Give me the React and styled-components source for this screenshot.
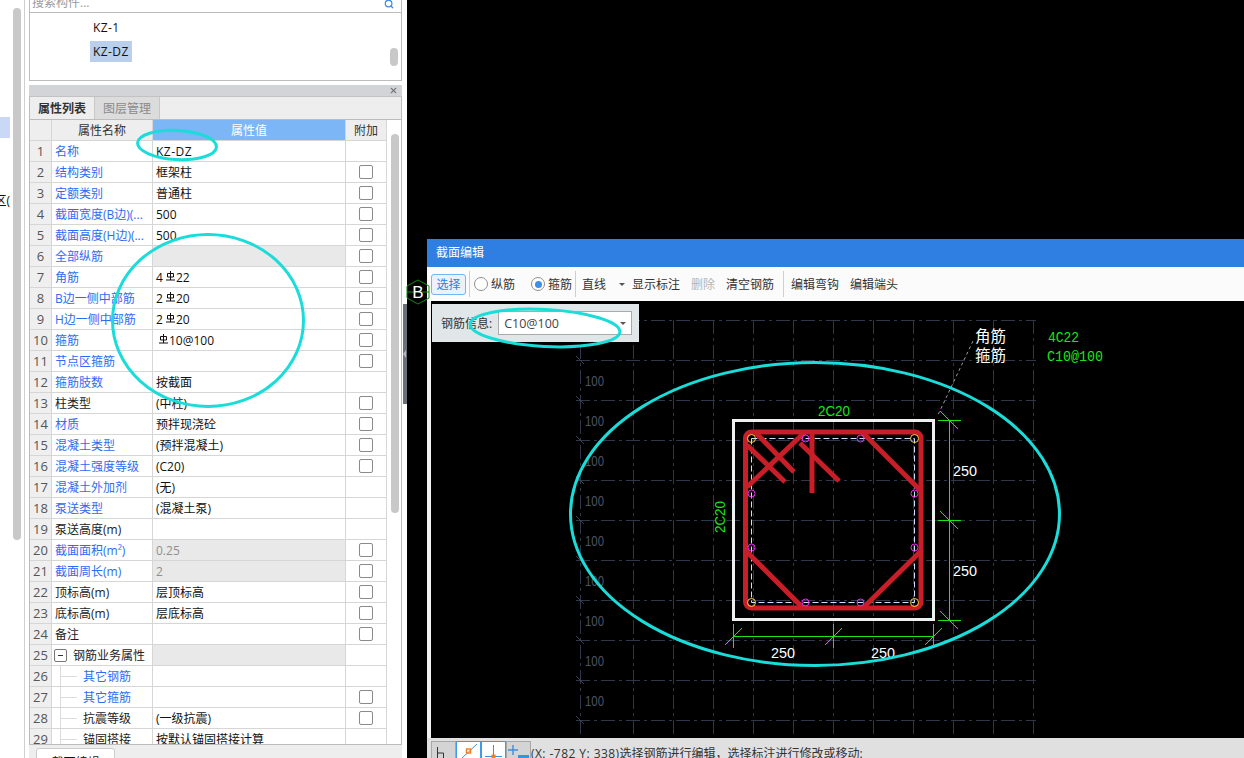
import React from 'react';
import styled, { createGlobalStyle } from 'styled-components';
import { Search, X } from 'lucide-react';

const ROWS = [
  { name: '名称', value: 'KZ-DZ', blue: true, spaced: true },
  { name: '结构类别', value: '框架柱', blue: true, check: true },
  { name: '定额类别', value: '普通柱', blue: true, check: true },
  { name: '截面宽度(B边)(...', value: '500', blue: true, check: true },
  { name: '截面高度(H边)(...', value: '500', blue: true, check: true },
  { name: '全部纵筋', value: '', blue: true, check: true, grey: true },
  { name: '角筋', value: '4Φ22', blue: true, check: true },
  { name: 'B边一侧中部筋', value: '2Φ20', blue: true, check: true },
  { name: 'H边一侧中部筋', value: '2Φ20', blue: true, check: true },
  { name: '箍筋', value: 'Φ10@100', blue: true, check: true },
  { name: '节点区箍筋', value: '', blue: true, check: true },
  { name: '箍筋肢数', value: '按截面', blue: true },
  { name: '柱类型', value: '(中柱)', check: true },
  { name: '材质', value: '预拌现浇砼', blue: true, check: true },
  { name: '混凝土类型', value: '(预拌混凝土)', blue: true, check: true },
  { name: '混凝土强度等级', value: '(C20)', blue: true, check: true },
  { name: '混凝土外加剂', value: '(无)', blue: true },
  { name: '泵送类型', value: '(混凝土泵)', blue: true },
  { name: '泵送高度(m)', value: '' },
  { name: '截面面积(m²)', value: '0.25', blue: true, check: true, grey: true, muted: true },
  { name: '截面周长(m)', value: '2', blue: true, check: true, grey: true, muted: true },
  { name: '顶标高(m)', value: '层顶标高', check: true },
  { name: '底标高(m)', value: '层底标高', check: true },
  { name: '备注', value: '', check: true },
  { name: '钢筋业务属性', value: '', grey: true, group: true },
  { name: '其它钢筋', value: '', blue: true, tree: true },
  { name: '其它箍筋', value: '', blue: true, tree: true, check: true },
  { name: '抗震等级', value: '(一级抗震)', tree: true, check: true },
  { name: '锚固搭接', value: '按默认锚固搭接计算', tree: true },
];

const GRID_X = [580, 633, 673, 713, 753, 793, 833, 873, 913, 953, 993, 1033];
const GRID_Y = [320, 360, 400, 440, 480, 520, 560, 600, 640, 680, 720];
const DIM_LABELS = [381, 421, 461, 501, 541, 581, 621, 661, 701];

const CORNER_BARS = [[751, 438], [914, 438], [751, 602], [914, 602]];
const SIDE_BARS = [
  [805, 438], [860, 438], [805, 602], [860, 602],
  [751, 493], [914, 493], [751, 547], [914, 547],
];
const STIRRUP_LINES = [
  [747, 445, 785, 482],
  [755, 432, 794, 472],
  [747, 487, 805, 432],
  [800, 443, 839, 481],
  [812, 433, 812, 493],
  [862, 432, 920, 490],
  [745, 550, 803, 608],
  [863, 608, 922, 550],
];

const RebarMark = () => (
  <MarkSvg viewBox="0 0 9 10" aria-hidden="true">
    <path d="M1.5 2.5h6v3.5h-6zM4.5 0v9M0 9h9" fill="none" stroke="#111" strokeWidth="1" />
  </MarkSvg>
);

const renderValue = (value) => {
  if (!value.includes('Φ')) return value;
  const [before, after] = value.split('Φ');
  return <>{before}<RebarMark />{after}</>;
};

const PropertyRow = ({ index, row }) => (
  <Row>
    <IndexCell>{index}</IndexCell>
    <NameCell $blue={row.blue} $tree={row.tree} $group={row.group}>
      {row.group && <ExpandBox />}
      {row.tree && <TreeLine />}
      {row.name}
    </NameCell>
    <ValueCell $grey={row.grey} $muted={row.muted} $spaced={row.spaced}>{renderValue(row.value)}</ValueCell>
    <ExtraCell>{row.check && <CheckBox />}</ExtraCell>
  </Row>
);

const CadDrawing = () => (
  <CadSvg viewBox="431 301 813 437">
    <g stroke="#30374a" strokeWidth="1" strokeDasharray="14 4 3 4" fill="none">
      {GRID_X.map((x) => <line key={x} x1={x + 0.5} y1="320" x2={x + 0.5} y2="738" />)}
      {GRID_Y.map((y) => <line key={y} x1="576" y1={y + 0.5} x2="1036" y2={y + 0.5} />)}
    </g>
    <g stroke="#3a4050" strokeWidth="1">
      {GRID_Y.map((y) => <line key={y} x1="576" y1={y - 4} x2="584" y2={y + 4} />)}
    </g>
    {DIM_LABELS.map((y) => (
      <CadText key={y} x="585" y={y + 5} fill="#4e5464" fontSize="14" textLength="19" lengthAdjust="spacingAndGlyphs">100</CadText>
    ))}

    <line x1="973" y1="341" x2="937" y2="417" stroke="#9a9a9a" strokeWidth="1" strokeDasharray="3 3" />

    <rect x="733.5" y="420.5" width="200" height="199" fill="none" stroke="#f0f0f0" strokeWidth="3" />
    <rect x="751.5" y="438.5" width="163" height="164" fill="none" stroke="#cfe0ff" strokeWidth="1" strokeDasharray="6 3" />
    <rect x="745.5" y="432" width="175.5" height="176" rx="6" fill="none" stroke="#c81e28" strokeWidth="5" />
    <g stroke="#c81e28" strokeWidth="5">
      {STIRRUP_LINES.map(([x1, y1, x2, y2]) => (
        <line key={`${x1}-${y1}`} x1={x1} y1={y1} x2={x2} y2={y2} />
      ))}
    </g>
    <g fill="none" strokeWidth="1">
      {CORNER_BARS.map(([cx, cy]) => <circle key={`${cx}-${cy}`} cx={cx + 0.5} cy={cy + 0.5} r="4" stroke="#ffd23c" />)}
      {SIDE_BARS.map(([cx, cy]) => <circle key={`${cx}-${cy}`} cx={cx + 0.5} cy={cy + 0.5} r="3.5" stroke="#f52cf5" />)}
    </g>

    <g stroke="#19e619" strokeWidth="1" fill="none">
      <line x1="949.5" y1="420" x2="949.5" y2="620" />
      <line x1="938" y1="420.5" x2="961" y2="420.5" />
      <line x1="938" y1="520.5" x2="961" y2="520.5" />
      <line x1="938" y1="620.5" x2="961" y2="620.5" />
      <line x1="940" y1="411" x2="958" y2="429" />
      <line x1="940" y1="511" x2="958" y2="529" />
      <line x1="940" y1="611" x2="958" y2="629" />
      <line x1="733" y1="636.5" x2="933" y2="636.5" />
      <line x1="733.5" y1="624" x2="733.5" y2="648" />
      <line x1="833.5" y1="624" x2="833.5" y2="648" />
      <line x1="933.5" y1="624" x2="933.5" y2="648" />
      <line x1="725" y1="645" x2="742" y2="628" />
      <line x1="825" y1="645" x2="842" y2="628" />
      <line x1="925" y1="645" x2="942" y2="628" />
    </g>

    <CadText x="818" y="416" fill="#19e619" fontSize="14" textLength="32" lengthAdjust="spacingAndGlyphs">2C20</CadText>
    <CadText x="725" y="533" fill="#19e619" fontSize="14" textLength="32" lengthAdjust="spacingAndGlyphs" transform="rotate(-90 725 533)">2C20</CadText>
    <CadText x="953" y="476" fill="#fff" fontSize="15" textLength="24" lengthAdjust="spacingAndGlyphs">250</CadText>
    <CadText x="953" y="576" fill="#fff" fontSize="15" textLength="24" lengthAdjust="spacingAndGlyphs">250</CadText>
    <CadText x="771" y="658" fill="#fff" fontSize="15" textLength="24" lengthAdjust="spacingAndGlyphs">250</CadText>
    <CadText x="871" y="658" fill="#fff" fontSize="15" textLength="24" lengthAdjust="spacingAndGlyphs">250</CadText>
    <CadText x="975" y="342" fill="#fff" fontSize="15.5">角筋</CadText>
    <CadText x="975" y="361" fill="#fff" fontSize="15.5">箍筋</CadText>
    <CadMono x="1048" y="342" fill="#19e619" fontSize="15" textLength="31" lengthAdjust="spacingAndGlyphs">4C22</CadMono>
    <CadMono x="1047" y="361" fill="#19e619" fontSize="15" textLength="56" lengthAdjust="spacingAndGlyphs">C10@100</CadMono>
  </CadSvg>
);

const SnapIcon = ({ kind }) => (
  <svg width="23" height="20" viewBox="0 0 23 20">
    {kind === 'ortho' && <path d="M5.5 5v15M5.5 11h6v9" fill="none" stroke="#333" strokeWidth="1" />}
    {kind === 'mid' && (
      <>
        <line x1="4" y1="17" x2="20" y2="2" stroke="#3d8fe0" strokeWidth="1" />
        <rect x="9.5" y="7" width="4" height="4" fill="none" stroke="#ef7d22" strokeWidth="1.4" />
      </>
    )}
    {kind === 'perp' && (
      <>
        <path d="M11.5 3v11M3 14.5h17" fill="none" stroke="#3d8fe0" strokeWidth="1" />
        <rect x="9.5" y="12.5" width="4" height="4" fill="#ef7d22" />
      </>
    )}
    {kind === 'add' && (
      <>
        <path d="M6 3v10M1 8h10" fill="none" stroke="#3d8fe0" strokeWidth="1.4" />
        <rect x="11" y="13" width="11" height="7" fill="#3d8fe0" />
      </>
    )}
  </svg>
);

const App = () => (
  <Page>
    <GlobalStyle />
    <Side>
      <Rail>
        <RailList>
          <RailSelected />
          <RailText>区(</RailText>
        </RailList>
        <RailThumb />
        <RailRule />
      </Rail>

      <Panel>
        <SearchBar>
          <SearchText>搜索构件...</SearchText>
          <SearchIcon><Search size={10} color="#3f8fdc" strokeWidth={3} /></SearchIcon>
        </SearchBar>
        <ListBox>
          <ListItems>
            <ListItem>KZ-1</ListItem>
            <ListItem $selected>KZ-DZ</ListItem>
          </ListItems>
          <ListThumb />
        </ListBox>

        <PanelHead>
          <X size={9} color="#777" strokeWidth={3} />
        </PanelHead>
        <Tabs>
          <Tab $active>属性列表</Tab>
          <Tab>图层管理</Tab>
        </Tabs>

        <TableArea>
          <Table>
            <HeadRow>
              <HeadCell />
              <HeadCell>属性名称</HeadCell>
              <HeadCell $active>属性值</HeadCell>
              <HeadCell>附加</HeadCell>
            </HeadRow>
            {ROWS.map((row, i) => <PropertyRow key={row.name} index={i + 1} row={row} />)}
          </Table>
          <TableScroll>
            <TableThumb />
          </TableScroll>
        </TableArea>

        <PanelFoot>
          <FootButton>截面编辑</FootButton>
        </PanelFoot>
      </Panel>

      <SplitterColumn>
        <Splitter />
      </SplitterColumn>
    </Side>

    <Workspace>
      <Dialog>
        <TitleBar>截面编辑</TitleBar>
        <Toolbar>
          <ToolPrimary>选择</ToolPrimary>
          <ToolDivider />
          <RadioItem><RadioDot />纵筋</RadioItem>
          <RadioItem $wide><RadioDot $on />箍筋</RadioItem>
          <ToolDivider />
          <ToolSelect>直线<ToolArrow /></ToolSelect>
          <ToolButton>显示标注</ToolButton>
          <ToolButton $disabled>删除</ToolButton>
          <ToolButton>清空钢筋</ToolButton>
          <ToolDivider $tight />
          <ToolButton>编辑弯钩</ToolButton>
          <ToolButton>编辑端头</ToolButton>
        </Toolbar>
        <Canvas>
          <CadDrawing />
          <InfoPanel>
            钢筋信息:
            <InfoSelect>C10@100<ToolArrow /></InfoSelect>
          </InfoPanel>
        </Canvas>
        <StatusBar>
          <SnapButton><SnapIcon kind="ortho" /></SnapButton>
          <SnapButton $on><SnapIcon kind="mid" /></SnapButton>
          <SnapButton $on><SnapIcon kind="perp" /></SnapButton>
          <SnapButton><SnapIcon kind="add" /></SnapButton>
          <StatusText><StatusCoords>(X: -782 Y: 338)</StatusCoords>选择钢筋进行编辑，选择标注进行修改或移动:</StatusText>
        </StatusBar>
      </Dialog>
    </Workspace>

    <Overlay viewBox="0 0 1244 758">
      <g fill="none" stroke="#0c8a0c" strokeWidth="1">
        <polygon points="418,280 429,286 429,298 418,304 407,298 407,286" />
        <line x1="407" y1="292" x2="429" y2="292" />
      </g>
      <BubbleText x="418" y="298" textAnchor="middle">B</BubbleText>
      <g fill="none" stroke="#1adcd8" strokeWidth="3">
        <ellipse cx="177" cy="145" rx="39.5" ry="14.5" transform="rotate(3 177 145)" />
        <ellipse cx="208" cy="320.5" rx="95.5" ry="86" />
        <ellipse cx="545" cy="328" rx="75" ry="18.5" transform="rotate(3 545 328)" />
        <ellipse cx="815" cy="514" rx="244.5" ry="151.5" />
      </g>
    </Overlay>
  </Page>
);

export default App;

const GlobalStyle = createGlobalStyle`
  html, body {
    margin: 0;
    padding: 0;
    background: #000;
  }

  * {
    box-sizing: border-box;
  }
`;

const Page = styled.div`
  position: relative;
  display: flex;
  width: 1244px;
  height: 758px;
  overflow: hidden;
  background: #000;
  font-family: "Open Sans", "Noto Sans CJK SC", sans-serif;
  font-size: 12px;
  color: #111;
`;

const Side = styled.aside`
  display: flex;
  flex: 0 0 407px;
  height: 100%;
  background: #fff;
`;

const Rail = styled.div`
  display: flex;
  flex: 0 0 29px;
`;

const RailList = styled.div`
  flex: 0 0 10px;
  margin-right: 3px;
  padding-top: 117px;
  overflow: hidden;
`;

const RailSelected = styled.div`
  height: 21px;
  background: #c9d8f6;
`;

const RailText = styled.div`
  display: flex;
  justify-content: flex-end;
  margin-top: 53px;
  white-space: nowrap;
`;

const RailThumb = styled.div`
  flex: 0 0 8px;
  height: 532px;
  margin-top: 8px;
  border-radius: 4px;
  background: #c8c8c8;
`;

const RailRule = styled.div`
  flex: 0 0 1px;
  margin-left: 3px;
  background: #cfcfcf;
`;

const Panel = styled.div`
  display: flex;
  flex-direction: column;
  flex: 0 0 373px;
  height: 100%;
  overflow: hidden;
`;

const SearchBar = styled.div`
  display: flex;
  flex: 0 0 13px;
  align-items: flex-end;
  justify-content: space-between;
  padding: 0 7px 1px 2px;
  border: 1px solid #bcbcbc;
  border-top: 0;
  overflow: hidden;
`;

const SearchText = styled.span`
  line-height: 20px;
  margin-bottom: -2px;
  color: #9a9a9a;
`;

const SearchIcon = styled.span`
  display: flex;
  margin-bottom: 2px;
`;

const ListBox = styled.div`
  display: flex;
  flex: 0 0 68px;
  border: 1px solid #bcbcbc;
  border-top: 0;
`;

const ListItems = styled.div`
  display: flex;
  flex: 1;
  flex-direction: column;
  align-items: flex-start;
  padding: 4px 0 0 60px;
`;

const ListItem = styled.div`
  height: 21px;
  margin-bottom: 3px;
  padding: 0 3px;
  line-height: 21px;
  letter-spacing: 0.4px;
  background: ${({ $selected }) => ($selected ? '#b9cfeb' : 'transparent')};
`;

const ListThumb = styled.div`
  flex: 0 0 8px;
  height: 18px;
  margin: 35px 3px 0 0;
  border-radius: 4px;
  background: #c8c8c8;
`;

const PanelHead = styled.div`
  display: flex;
  flex: 0 0 12px;
  align-items: center;
  justify-content: flex-end;
  margin-top: 4px;
  padding-right: 4px;
  background: #d3d4d8;
  border-bottom: 1px solid #c2c2c2;
`;

const Tabs = styled.div`
  display: flex;
  flex: 0 0 23px;
  background: #eeeeee;
  border: 1px solid #bcbcbc;
  border-width: 0 1px 1px;
`;

const Tab = styled.div`
  width: 65px;
  height: 22px;
  padding-top: 1px;
  line-height: 22px;
  text-align: center;
  font-weight: ${({ $active }) => ($active ? 700 : 400)};
  color: ${({ $active }) => ($active ? '#333' : '#8a8a8a')};
  background: ${({ $active }) => ($active ? '#eeeeee' : '#dcdcdc')};
  border-right: 1px solid #c8c8c8;
`;

const TableArea = styled.div`
  display: flex;
  flex: 1;
  min-height: 0;
  overflow: hidden;
  border: 1px solid #bcbcbc;
  border-width: 0 1px 1px;
`;

const Table = styled.div`
  flex: 0 0 357px;
`;

const Row = styled.div`
  display: grid;
  grid-template-columns: 22px 101px 193px 41px;
  grid-template-rows: 21px;
  height: 21px;
  line-height: 21px;
`;

const HeadRow = styled(Row)`
  text-align: center;
  color: #333;
`;

const HeadCell = styled.div`
  background: ${({ $active }) => ($active ? '#7cb6f6' : '#eeeeee')};
  color: ${({ $active }) => ($active ? '#fff' : '#333')};
  border-right: 1px solid #d6d6d6;
  border-bottom: 1px solid #d6d6d6;
`;

const BodyCell = styled.div`
  border-right: 1px solid #d6d6d6;
  border-bottom: 1px solid #d6d6d6;
  white-space: nowrap;
  overflow: hidden;
`;

const IndexCell = styled(BodyCell)`
  background: #efefef;
  text-align: center;
  font-size: 13px;
  color: #555;
`;

const NameCell = styled(BodyCell)`
  position: relative;
  display: flex;
  align-items: center;
  padding-left: ${({ $tree, $group }) => ($tree ? '9px' : $group ? '2px' : '3px')};
  color: ${({ $blue }) => ($blue ? '#2f6bf2' : '#222')};

  ${({ $tree }) => $tree && `
    &::before {
      content: "";
      position: absolute;
      left: 8px;
      top: 0;
      bottom: 0;
      width: 1px;
      background: #dcdcdc;
    }
  `}
`;

const TreeLine = styled.span`
  flex: 0 0 16px;
  height: 1px;
  margin-right: 6px;
  background: #dcdcdc;
`;

const ExpandBox = styled.span`
  position: relative;
  flex: 0 0 13px;
  height: 13px;
  margin-right: 6px;
  border: 1px solid #777;
  border-radius: 2px;

  &::after {
    content: "";
    position: absolute;
    left: 3px;
    right: 3px;
    top: 5px;
    height: 1px;
    background: #333;
  }
`;

const ValueCell = styled(BodyCell)`
  padding-left: 3px;
  letter-spacing: ${({ $spaced }) => ($spaced ? '0.5px' : '0')};
  color: ${({ $muted }) => ($muted ? '#8f8f8f' : '#111')};
  background: ${({ $grey }) => ($grey ? '#e9e9e9' : '#fff')};
`;

const ExtraCell = styled(BodyCell)`
  display: flex;
  align-items: center;
  justify-content: center;
  padding-bottom: 1px;
`;

const CheckBox = styled.span`
  width: 14px;
  height: 14px;
  border: 1px solid #8a8a8a;
  border-radius: 2px;
  background: #fff;
`;

const MarkSvg = styled.svg`
  width: 9px;
  height: 10px;
  margin: 0 1px 0 3px;
  vertical-align: 1px;
`;

const TableScroll = styled.div`
  flex: 1;
  padding: 14px 0 0 4px;
`;

const TableThumb = styled.div`
  width: 8px;
  height: 379px;
  border-radius: 4px;
  background: #c8c8c8;
`;

const PanelFoot = styled.div`
  flex: 0 0 13px;
  padding: 3px 0 0 7px;
  overflow: hidden;
  background: #eeeeee;
`;

const FootButton = styled.div`
  width: 79px;
  height: 26px;
  line-height: 27px;
  text-align: center;
  background: #fff;
  border: 1px solid #cccccc;
  border-radius: 3px;
`;

const SplitterColumn = styled.div`
  flex: 1;
  padding: 304px 0 0 1px;
`;

const Splitter = styled.div`
  position: relative;
  height: 100px;
  background: #6c7079;

  &::after {
    content: "";
    position: absolute;
    left: 0;
    top: 46px;
    border: 4px solid transparent;
    border-left-width: 0;
    border-right: 3px solid #b5b8bd;
  }
`;

const Workspace = styled.main`
  flex: 1;
  min-width: 0;
  padding: 239px 0 0 20px;
`;

const Dialog = styled.section`
  display: flex;
  flex-direction: column;
  height: 519px;
  background: #f1f1f1;
`;

const TitleBar = styled.header`
  flex: 0 0 27px;
  padding-left: 9px;
  line-height: 28px;
  color: #fff;
  background: #2e7fe1;
`;

const Toolbar = styled.div`
  display: flex;
  flex: 0 0 34px;
  align-items: center;
  padding-left: 4px;
  background: #fbfbfb;
  color: #333;
`;

const ToolPrimary = styled.div`
  width: 35px;
  height: 21px;
  line-height: 19px;
  text-align: center;
  color: #2f7fe0;
  background: #e9f3fe;
  border: 1px solid #73b4f2;
  border-radius: 3px;
`;

const ToolDivider = styled.div`
  flex: 0 0 1px;
  height: 26px;
  margin: 0 ${({ $tight }) => ($tight ? '2px' : '4px')} 0 3px;
  background: #cfcfcf;
`;

const RadioItem = styled.div`
  display: flex;
  align-items: center;
  gap: 3px;
  margin-left: ${({ $wide }) => ($wide ? '16px' : '0')};
`;

const RadioDot = styled.span`
  position: relative;
  width: 14px;
  height: 14px;
  border: 1px solid #8f8f8f;
  border-radius: 50%;
  background: #fff;

  ${({ $on }) => $on && `
    &::after {
      content: "";
      position: absolute;
      inset: 2.5px;
      border-radius: 50%;
      background: #3d8fe8;
    }
  `}
`;

const ToolSelect = styled.div`
  display: flex;
  flex: 0 0 43px;
  align-items: center;
  justify-content: space-between;
  margin: 0 2px;
`;

const ToolArrow = styled.span`
  width: 0;
  height: 0;
  border: 3px solid transparent;
  border-top: 3px solid #555;
  border-bottom: 0;
`;

const ToolButton = styled.div`
  padding: 0 5px;
  margin-right: 1px;
  line-height: 21px;
  color: ${({ $disabled }) => ($disabled ? '#b4b4b4' : '#333')};
  border-radius: 3px;
`;

const Canvas = styled.div`
  position: relative;
  flex: 1;
  min-height: 0;
  margin-left: 4px;
  background: #000;
`;

const CadSvg = styled.svg`
  display: block;
  width: 813px;
  height: 437px;
`;

const CadText = styled.text`
  font-family: "Liberation Sans", "Noto Sans CJK SC", sans-serif;
`;

const CadMono = styled.text`
  font-family: "Liberation Mono", monospace;
`;

const InfoPanel = styled.div`
  position: absolute;
  left: 1px;
  top: 3px;
  display: flex;
  align-items: center;
  gap: 6px;
  width: 207px;
  height: 38px;
  padding-left: 9px;
  color: #333;
  background: #e1e7e8;
`;

const InfoSelect = styled.div`
  display: flex;
  align-items: center;
  justify-content: space-between;
  width: 134px;
  height: 24px;
  padding: 0 5px;
  font-size: 12.5px;
  color: #444;
  background: #fff;
  border: 1px solid #aaaaaa;
`;

const StatusBar = styled.footer`
  display: flex;
  flex: 0 0 20px;
  align-items: flex-start;
  padding: 3px 0 0 4px;
  overflow: hidden;
  background: #e0e0e0;
`;

const SnapButton = styled.div`
  flex: 0 0 25px;
  height: 24px;
  background: ${({ $on }) => ($on ? '#fff' : '#d4d4d4')};
  border: ${({ $on }) => ($on ? '1px solid #3d9bf0' : '1px solid #a8a8a8')};
`;

const StatusText = styled.span`
  padding-top: 5px;
  line-height: 16px;
  white-space: nowrap;
  color: #333;
`;

const StatusCoords = styled.span`
  letter-spacing: 0.45px;
`;

const Overlay = styled.svg`
  position: absolute;
  left: 0;
  top: 0;
  width: 1244px;
  height: 758px;
  pointer-events: none;
`;

const BubbleText = styled.text`
  font-family: "Liberation Sans", sans-serif;
  font-size: 17px;
  fill: #fff;
`;
